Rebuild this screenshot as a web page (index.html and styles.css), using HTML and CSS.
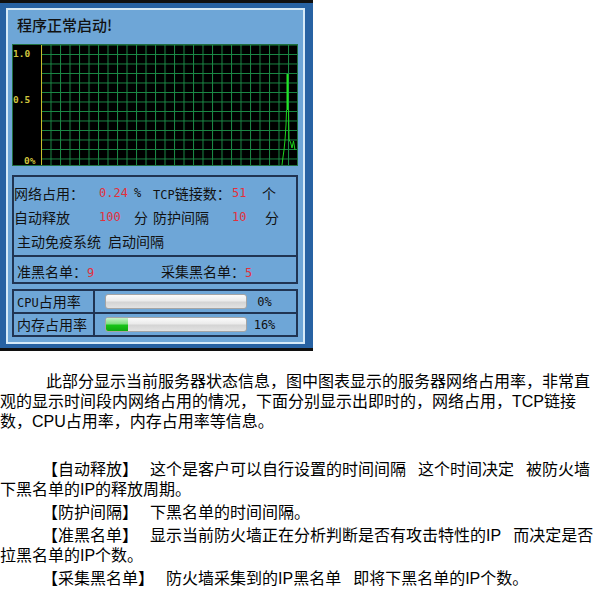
FILE: index.html
```html
<!DOCTYPE html>
<html lang="zh-CN">
<head>
<meta charset="utf-8">
<title>服务器状态</title>
<link rel="stylesheet" href="styles.css">
</head>
<body>
<div class="monitor">
  <div class="screen">
    <div class="title">程序正常启动!</div>
    <div class="chart">
      <svg width="284" height="120" viewBox="0 0 284 120" xmlns="http://www.w3.org/2000/svg">
        <defs>
          <pattern id="grid" x="28" y="9" width="9.5" height="9.5" patternUnits="userSpaceOnUse">
            <path d="M0.5 0 V9.5 M0 0.5 H9.5" stroke="#1b8a46" stroke-width="1" fill="none"/>
          </pattern>
        </defs>
        <rect x="0" y="0" width="284" height="120" fill="#000"/>
        <rect x="28" y="0" width="256" height="120" fill="url(#grid)"/>
        <line x1="28.5" y1="0" x2="28.5" y2="120" stroke="#c8bd2a" stroke-width="1"/>
        <text x="0" y="12" class="axis">1.0</text>
        <text x="0" y="58" class="axis">0.5</text>
        <text x="11" y="119" class="axis">0%</text>
        <polyline points="273.5,65 273,80 272,95 271,105 270,112 269,120" fill="none" stroke="#1ed41e" stroke-width="1"/>
        <polyline points="275.5,65 276,95 277.5,97 279,103 280.5,96 282,105" fill="none" stroke="#1ed41e" stroke-width="1"/>
        <line x1="274.5" y1="29" x2="274.5" y2="65" stroke="#22e622" stroke-width="2"/>
      </svg>
    </div>
    <div class="info">
      <div class="stats">
        <span>网络占用：</span><span class="val">0.24</span><span class="unit mono">%</span><span><span class="mono">TCP</span>链接数：</span><span class="val">51</span><span class="unit">个</span>
        <span>自动释放</span><span class="val">100</span><span class="unit">分</span><span>防护间隔</span><span class="val">10</span><span class="unit unit-pad">分</span>
        <span class="wide">主动免疫系统&ensp;启动间隔</span>
      </div>
      <div class="lists">
        <span class="list-a">准黑名单：<span class="val">9</span></span>
        <span class="list-b">采集黑名单：<span class="val">5</span></span>
      </div>
    </div>
    <div class="usage">
      <div class="urow">
        <div class="ulabel"><span class="mono">CPU</span>占用率</div>
        <div class="ucell">
          <div class="track"><div class="fill" style="width:0%"></div></div>
          <span class="pct">0%</span>
        </div>
      </div>
      <div class="urow">
        <div class="ulabel">内存占用率</div>
        <div class="ucell">
          <div class="track"><div class="fill" style="width:16%"></div></div>
          <span class="pct">16%</span>
        </div>
      </div>
    </div>
  </div>
</div>
<div class="desc">
  <p class="lead">此部分显示当前服务器状态信息，图中图表显示的服务器网络占用率，非常直观的显示时间段内网络占用的情况，下面分别显示出即时的，网络占用，TCP链接数，CPU占用率，内存占用率等信息。</p>
  <p class="gap">【自动释放】<span class="sp"> </span>这个是客户可以自行设置的时间间隔<span class="sp"> </span>这个时间决定<span class="sp"> </span>被防火墙下黑名单的IP的释放周期。</p>
  <p>【防护间隔】<span class="sp"> </span>下黑名单的时间间隔。</p>
  <p>【准黑名单】<span class="sp"> </span>显示当前防火墙正在分析判断是否有攻击特性的IP<span class="sp"> </span>而决定是否拉黑名单的IP个数。</p>
  <p>【采集黑名单】<span class="sp"> </span>防火墙采集到的IP黑名单<span class="sp"> </span>即将下黑名单的IP个数。</p>
</div>
</body>
</html>
```

FILE: styles.css
```css
* { box-sizing: border-box; }

body {
  margin: 0;
  background: #fff;
  color: #000;
  font-family: "Liberation Sans", "Noto Sans CJK SC", sans-serif;
}

.monitor {
  width: 313px;
  height: 351px;
  background: #2762a3;
  border-top: 3px solid #101010;
  border-bottom: 3px solid #101010;
  padding: 5px 8px 0 6px;
}

.screen {
  width: 299px;
  height: 336px;
  background: #6ea6d7;
  border: 2px solid #d6eaf8;
  padding: 0 5px 0 4px;
  font-family: "Noto Sans CJK SC", sans-serif;
  font-size: 14px;
  color: #111;
}

.title {
  height: 34px;
  line-height: 30px;
  padding-left: 5px;
  font-size: 15px;
  font-weight: 500;
}

.chart {
  width: 286px;
  height: 122px;
  border: 1px solid #1f6f40;
  background: #000;
}

.chart svg { display: block; }

.axis {
  font-family: "DejaVu Sans Mono", monospace;
  font-size: 9.5px;
  font-weight: bold;
  fill: #cfc43e;
}

.info {
  margin-top: 9px;
  height: 109px;
  border: 2px solid #203452;
}

.mono {
  font-family: "DejaVu Sans Mono", monospace;
  font-size: 12px;
}

.stats {
  display: grid;
  grid-template-columns: 85px 35px 19px 79px 30px 1fr;
  grid-auto-rows: 24px;
  align-items: center;
  padding: 4px 0 2px;
  border-bottom: 2px solid #203452;
}

.stats .wide {
  grid-column: 1 / -1;
  padding-left: 3px;
}

.val {
  color: #e2303c;
  font-family: "DejaVu Sans Mono", monospace;
  font-size: 12px;
}

.unit-pad { padding-left: 3px; }

.lists {
  display: flex;
  height: 25px;
  padding-top: 3px;
  line-height: 22px;
}

.list-a {
  width: 147px;
  padding-left: 3px;
}

.usage {
  margin-top: 5px;
  border: 2px solid #203452;
}

.urow {
  display: flex;
  height: 21px;
}

.urow + .urow {
  border-top: 2px solid #203452;
  height: 23px;
}

.ulabel {
  width: 81px;
  padding-left: 3px;
  line-height: 21px;
  border-right: 2px solid #203452;
}

.ucell {
  display: flex;
  align-items: center;
  padding-left: 10px;
}

.track {
  width: 142px;
  height: 15px;
  border: 1px solid #a4a4a4;
  border-radius: 3px;
  background: linear-gradient(#fbfbfb, #ebebeb 45%, #d4d4d4 55%, #e2e2e2);
  overflow: hidden;
}

.fill {
  height: 100%;
  background: linear-gradient(#c6f3c6, #7fe07f 45%, #17c417 55%, #10a810);
}

.pct {
  width: 35px;
  text-align: center;
  font-family: "DejaVu Sans Mono", monospace;
  font-size: 12px;
}

.desc {
  margin-top: 21px;
  width: 597px;
  font-size: 16px;
  line-height: 20px;
}

.desc p {
  margin: 3px 0 0;
  text-indent: 42px;
}

.desc p.lead {
  margin-top: 0;
  text-indent: 46px;
}

.desc p.gap { margin-top: 28px; }

.sp {
  display: inline-block;
  width: 12px;
}
```
